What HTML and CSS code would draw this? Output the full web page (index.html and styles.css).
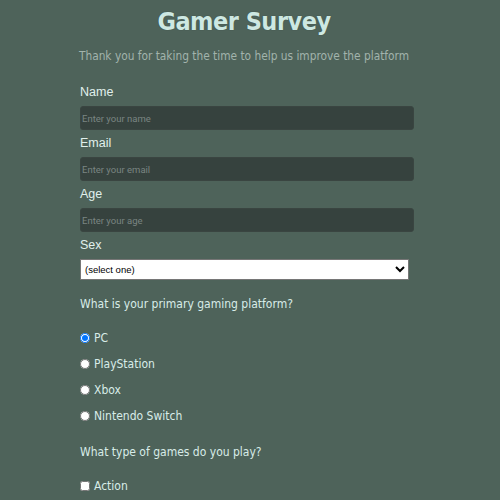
FILE: index.html
```html
<!DOCTYPE html>
<html>
<head>
<meta charset="utf-8">
<link rel="stylesheet" href="styles.css">
</head>
<body>
<div class="page">
<header class="head">
  <h1 class="title">Gamer Survey</h1>
  <p class="subtitle">Thank you for taking the time to help us improve the platform</p>
</header>
<form class="form">
  <label class="label" for="name">Name</label>
  <input class="field" id="name" type="text" placeholder="Enter your name">
  <label class="label" for="email">Email</label>
  <input class="field" id="email" type="email" placeholder="Enter your email">
  <label class="label" for="age">Age</label>
  <input class="field" id="age" type="number" placeholder="Enter your age">
  <label class="label" for="sex">Sex</label>
  <select class="select" id="sex">
    <option>(select one)</option>
    <option>Male</option>
    <option>Female</option>
  </select>
  <p class="question">What is your primary gaming platform?</p>
  <div class="options">
    <label class="option"><input type="radio" name="platform" checked> PC</label>
    <label class="option"><input type="radio" name="platform"> PlayStation</label>
    <label class="option"><input type="radio" name="platform"> Xbox</label>
    <label class="option"><input type="radio" name="platform"> Nintendo Switch</label>
  </div>
  <p class="question">What type of games do you play?</p>
  <div class="options">
    <label class="option"><input type="checkbox"> Action</label>
  </div>
</form>
</div>
</body>
</html>
```
FILE: styles.css
```css
html, body {
  margin: 0;
  padding: 0;
  background: #4e635a;
  overflow: hidden;
}
body {
  font-family: "DejaVu Sans Condensed", "DejaVu Sans", Verdana, sans-serif;
  color: #d8ece8;
}
.page {
  width: 488px;
}
.head {
  text-align: center;
  padding-top: 6px;
}
.title {
  margin: 0;
  font-size: 25px;
  font-weight: bold;
  letter-spacing: -0.5px;
  color: #cde8e2;
  line-height: 32px;
  text-shadow: 0 0 1px #34423d;
}
.subtitle {
  margin: 10px 0 0;
  font-size: 11.8px;
  color: #a2b3ac;
  line-height: 16px;
}
.form {
  width: 334px;
  margin: 20px 0 0 80px;
  display: flex;
  flex-direction: column;
}
.label {
  font-family: "Liberation Sans", Arial, sans-serif;
  font-size: 12.5px;
  line-height: 16px;
  color: #e0f0ec;
  margin-bottom: 6px;
}
.field {
  box-sizing: border-box;
  height: 24px;
  border: 1px solid #3a4541;
  border-radius: 3px;
  background: #36423e;
  color: #ddd;
  font-family: Roboto, "Liberation Sans", sans-serif;
  font-size: 9.5px;
  padding: 0 0 0 1px;
  margin-bottom: 5px;
  outline: none;
}
.field::placeholder {
  color: #7a8582;
}
.select {
  box-sizing: border-box;
  width: 329px;
  height: 21px;
  font-family: "Liberation Sans", Arial, sans-serif;
  font-size: 9.5px;
  background: #fff;
  color: #000;
  border: 1px solid #767676;
  border-radius: 0;
  padding: 0;
}
.question {
  margin: 16px 0 0;
  font-size: 12px;
  line-height: 16px;
  color: #d8ece8;
}
.options {
  display: flex;
  flex-direction: column;
  gap: 10px;
  margin-top: 18px;
}
.option {
  display: flex;
  align-items: center;
  gap: 4px;
  font-size: 12px;
  line-height: 16px;
  color: #d8ece8;
}
.option input {
  margin: 0;
  width: 10px;
  height: 10px;
}
.options + .question {
  margin-top: 20px;
}
```
